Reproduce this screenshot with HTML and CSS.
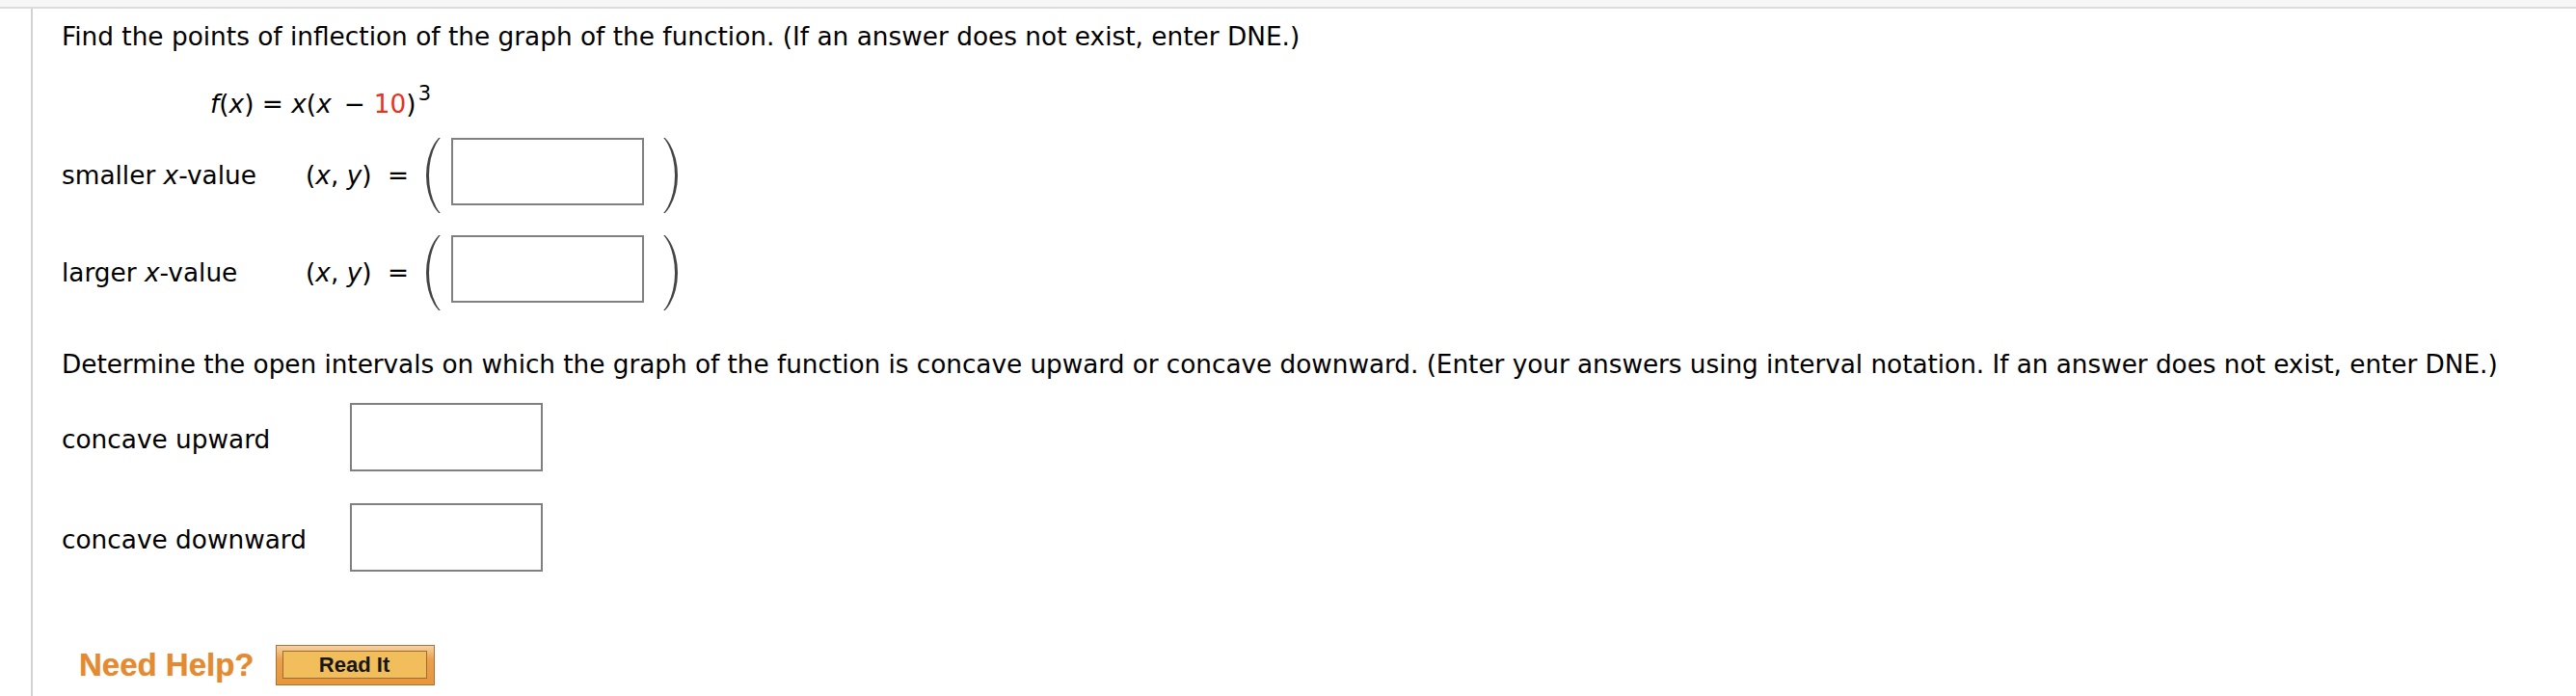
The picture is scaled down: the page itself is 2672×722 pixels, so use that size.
FILE: index.html
```html
<!DOCTYPE html>
<html lang="en">
<head>
<meta charset="utf-8">
<title>Points of inflection</title>
<link rel="stylesheet" href="styles.css">
</head>
<body>
<div class="topbar"></div>
<main class="question">
  <p class="prompt">Find the points of inflection of the graph of the function. (If an answer does not exist, enter DNE.)</p>
  <div class="func"><i>f</i>(<i>x</i>) = <i>x</i>(<i>x</i><span class="minus">−</span><span class="red">10</span>)<sup>3</sup></div>

  <div class="pt-row">
    <span class="pt-label">smaller <i>x</i>-value</span>
    <span class="pt-xy">(<i>x</i>, <i>y</i>)</span>
    <span class="eq">=</span>
    <span class="paren paren-l"><span></span></span>
    <input class="ans ans-pt" type="text">
    <span class="paren paren-r"><span></span></span>
  </div>

  <div class="pt-row pt-row-2">
    <span class="pt-label">larger <i>x</i>-value</span>
    <span class="pt-xy">(<i>x</i>, <i>y</i>)</span>
    <span class="eq">=</span>
    <span class="paren paren-l"><span></span></span>
    <input class="ans ans-pt" type="text">
    <span class="paren paren-r"><span></span></span>
  </div>

  <p class="prompt prompt-2">Determine the open intervals on which the graph of the function is concave upward or concave downward. (Enter your answers using interval notation. If an answer does not exist, enter DNE.)</p>

  <div class="cc-row">
    <span class="cc-label">concave upward</span>
    <input class="ans ans-cc" type="text">
  </div>
  <div class="cc-row cc-row-2">
    <span class="cc-label">concave downward</span>
    <input class="ans ans-cc" type="text">
  </div>

  <div class="help-row">
    <span class="need-help">Need Help?</span>
    <button class="read-it" type="button"><span class="read-it-inner">Read It</span></button>
  </div>
</main>
</body>
</html>
```

FILE: styles.css
```css
html, body {
  margin: 0;
  padding: 0;
  background: #ffffff;
}

body {
  font-family: "DejaVu Sans", Verdana, sans-serif;
  font-size: 26.35px;
  color: #000000;
}

.topbar {
  height: 7px;
  background: #f6f6f6;
  border-bottom: 2px solid #dcdcdc;
}

.question {
  margin-left: 32px;
  border-left: 2px solid #d2d2d2;
  padding: 14px 0 0 30px;
  height: 713px;
  box-sizing: border-box;
}

.prompt {
  margin: 0;
  line-height: 30px;
  white-space: nowrap;
}

.prompt-2 {
  margin-top: 41px;
  letter-spacing: -0.05px;
}

.func {
  margin: 40px 0 0 154px;
  line-height: 30px;
  white-space: nowrap;
}

.func .minus {
  margin: 0 9px 0 13px;
}

.func .red {
  color: #e8321e;
}

.func sup {
  font-size: 21px;
  line-height: 0;
  vertical-align: 13px;
  margin-left: 2px;
}

.pt-row {
  display: flex;
  align-items: center;
  height: 78px;
  margin-top: 20px;
  line-height: 30px;
}

.pt-row-2 {
  margin-top: 23px;
}

.pt-label {
  width: 253px;
  flex-shrink: 0;
}

.pt-xy {
  width: 85px;
  flex-shrink: 0;
}

.eq {
  width: 22px;
  flex-shrink: 0;
}

.paren {
  display: flex;
  align-items: center;
  width: 16px;
  height: 78px;
  overflow: hidden;
  flex-shrink: 0;
}

.paren > span {
  flex-shrink: 0;
  width: 56px;
  height: 92px;
  box-sizing: border-box;
  border-radius: 50%;
}

.paren-l {
  margin-left: 18px;
}

.paren-l > span {
  border-left: 3px solid #444444;
}

.paren-r {
  justify-content: flex-end;
  margin-left: 19px;
}

.paren-r > span {
  border-right: 3px solid #444444;
}

.ans {
  display: block;
  margin: 0;
  padding: 0;
  box-sizing: border-box;
  border: 2px solid #808080;
  border-radius: 0;
  background: #ffffff;
  outline: none;
}

.ans-pt {
  align-self: flex-start;
  width: 200px;
  height: 70px;
  margin-left: 10px;
}

.cc-row {
  display: flex;
  align-items: center;
  margin-top: 25px;
  line-height: 30px;
}

.cc-row-2 {
  margin-top: 33px;
}

.cc-label {
  width: 299px;
  flex-shrink: 0;
  padding-top: 4px;
}

.ans-cc {
  width: 200px;
  height: 71px;
}

.help-row {
  display: flex;
  align-items: center;
  margin-top: 76px;
}

.need-help {
  margin-left: 18px;
  font-family: "Liberation Sans", Arial, sans-serif;
  font-weight: bold;
  font-size: 33px;
  color: #e38a32;
  text-shadow: 0 0 1px rgba(227, 138, 50, 0.6);
  line-height: 40px;
}

.read-it {
  display: flex;
  margin: 0 0 0 22px;
  width: 165px;
  height: 42px;
  padding: 5px 7px 6px 6px;
  box-sizing: border-box;
  border: 1px solid #a8733a;
  border-radius: 0;
  background: linear-gradient(#f6d3a4 0%, #eba04a 35%, #e8963c 100%);
  cursor: pointer;
}

.read-it-inner {
  flex: 1;
  display: flex;
  align-items: center;
  justify-content: center;
  border: 1px solid #9c6c36;
  background: #f2bd5b;
  font-family: "Liberation Sans", Arial, sans-serif;
  font-weight: bold;
  font-size: 22px;
  color: #161616;
  line-height: 1;
}
```
